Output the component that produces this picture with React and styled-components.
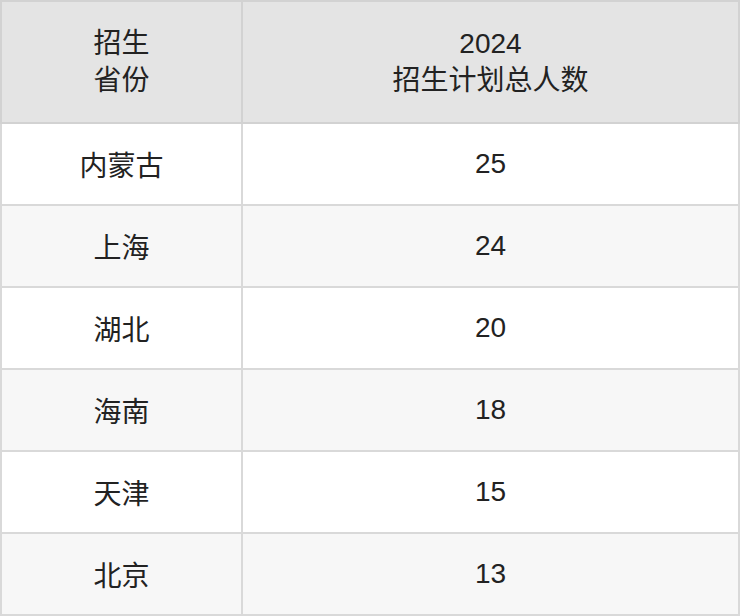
import React from 'react'
import styled, { createGlobalStyle } from 'styled-components'

const rows = [
  ['内蒙古', '25'],
  ['上海', '24'],
  ['湖北', '20'],
  ['海南', '18'],
  ['天津', '15'],
  ['北京', '13'],
]

const App = () => {
  return (
    <>
      <GlobalStyle />
      <Table>
        <thead>
          <tr>
            <HeadCell $w='239px'>
              招生
              <br />
              省份
            </HeadCell>
            <HeadCell>
              2024
              <br />
              招生计划总人数
            </HeadCell>
          </tr>
        </thead>
        <tbody>
          {rows.map(([prov, num], i) => (
            <Row key={prov} $alt={i % 2 === 1}>
              <Cell>{prov}</Cell>
              <Cell>{num}</Cell>
            </Row>
          ))}
        </tbody>
      </Table>
    </>
  )
}

export default App

const GlobalStyle = createGlobalStyle`
  html, body {
    margin: 0;
    padding: 0;
    background: #fff;
  }
  body {
    font-family: "Liberation Sans", "Noto Sans CJK SC", sans-serif;
    color: #222;
  }
`

const Table = styled.table`
  width: 740px;
  border-collapse: collapse;
  table-layout: fixed;
  font-size: 28px;
`

const HeadCell = styled.th`
  width: ${(p) => p.$w || 'auto'};
  height: 120px;
  padding: 0;
  background: #e4e4e4;
  border: 2px solid #d2d2d2;
  font-weight: normal;
  text-align: center;
  vertical-align: middle;
  line-height: 37px;
`

const Row = styled.tr`
  background: ${(p) => (p.$alt ? '#f7f7f7' : '#ffffff')};
`

const Cell = styled.td`
  height: 80px;
  padding: 0;
  border: 2px solid #d9d9d9;
  text-align: center;
  vertical-align: middle;
`
